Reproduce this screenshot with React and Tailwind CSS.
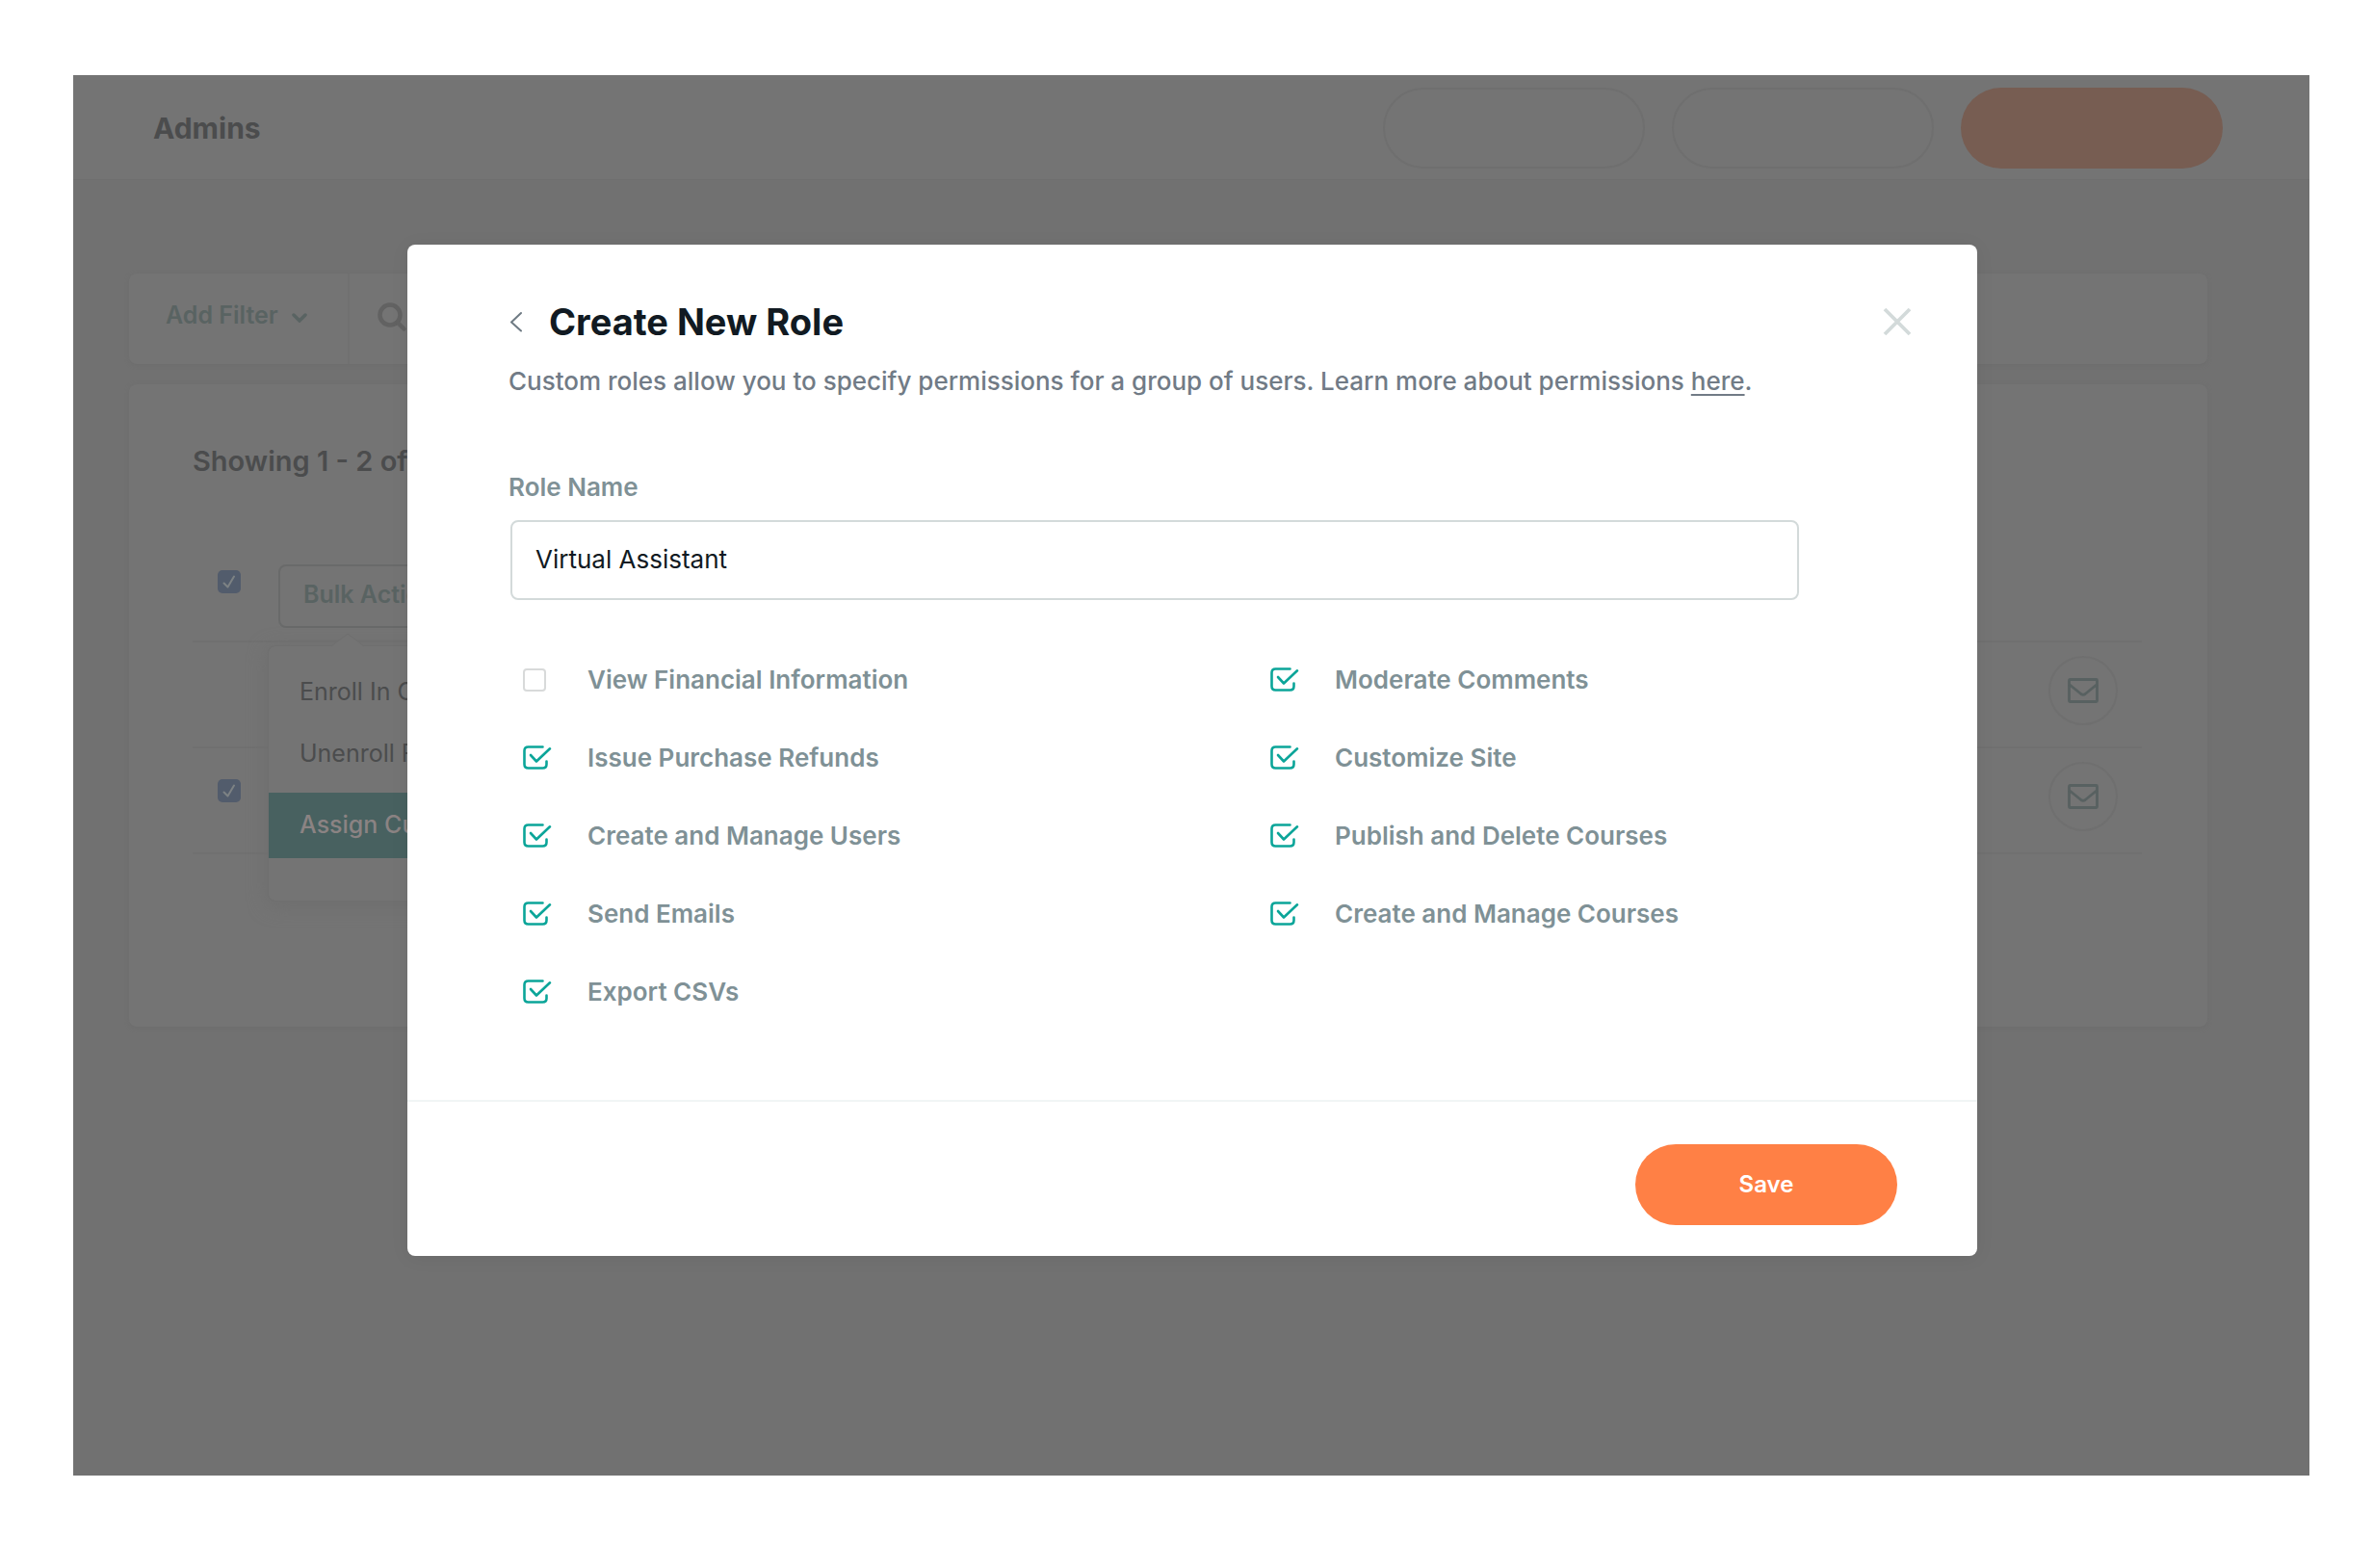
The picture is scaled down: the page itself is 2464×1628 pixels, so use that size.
import { useState } from "react";

const permissions = [
  { id: "financial", label: "View Financial Information", enabled: false },
  { id: "comments", label: "Moderate Comments", enabled: true },
  { id: "refunds", label: "Issue Purchase Refunds", enabled: true },
  { id: "site", label: "Customize Site", enabled: true },
  { id: "users", label: "Create and Manage Users", enabled: true },
  { id: "publish", label: "Publish and Delete Courses", enabled: true },
  { id: "emails", label: "Send Emails", enabled: true },
  { id: "courses", label: "Create and Manage Courses", enabled: true },
  { id: "csv", label: "Export CSVs", enabled: true },
];

function MailButton() {
  return (
    <button
      type="button"
      aria-label="Send email"
      className="flex size-[72px] items-center justify-center rounded-full border-2 border-[#6f6f6f]"
    >
      <svg viewBox="0 0 32 26" className="h-[26px] w-8" fill="none" stroke="#586161" strokeWidth="2.8">
        <rect x="1.5" y="1.5" width="29" height="23" rx="1" />
        <path d="M1.500 6.500L13.800 16.500q2.200 1.600 4.400 0L30.500 6.500" />
      </svg>
    </button>
  );
}

function RowCheckbox({ label }) {
  return (
    <span className="grid size-6">
      <input
        type="checkbox"
        defaultChecked
        aria-label={label}
        className="col-start-1 row-start-1 size-6 appearance-none rounded-[5px] bg-[#525c6c]"
      />
      <svg
        viewBox="0 0 24 24"
        className="pointer-events-none col-start-1 row-start-1 size-6"
        fill="none"
        stroke="#7d8284"
        strokeWidth="2"
        strokeLinecap="round"
        strokeLinejoin="round"
      >
        <path d="M6.500 13.500l4 4L17 6.500" />
      </svg>
    </span>
  );
}

function Permission({ item, checked, onToggle }) {
  return (
    <label className="flex h-[81px] items-center gap-[37px] text-[26px] leading-8 font-semibold text-[#7f9196]">
      <span className="grid h-8 w-[30px] items-center">
        <input
          type="checkbox"
          checked={checked}
          onChange={onToggle}
          className="peer col-start-1 row-start-1 size-6 appearance-none rounded-[4px] border-2 border-[#d8dada] checked:border-transparent"
        />
        <svg
          viewBox="0 0 30 26"
          className="pointer-events-none invisible col-start-1 row-start-1 h-[26px] w-[30px] peer-checked:visible"
          fill="none"
          stroke="#0ba599"
          strokeWidth="2.6"
          strokeLinecap="round"
          strokeLinejoin="round"
        >
          <path d="M20.500 1.500H5.500Q1.500 1.500 1.500 5.500V19.500Q1.500 23.500 5.500 23.500H20.500Q24.500 23.500 24.500 19.500V16.500" />
          <path d="M8 10l6 6.500L28 3.300" />
        </svg>
      </span>
      {item.label}
    </label>
  );
}

function AdminsPage() {
  return (
    <div className="text-[#4b4c4d]">
      <header className="flex h-[109px] items-center justify-between border-b border-[#6f6f6f] bg-[#747474] pt-0.5 pr-[90px] pl-[83px]">
        <h1 className="text-[30px] font-bold">Admins</h1>
        <div className="flex gap-7">
          <button type="button" aria-label="Export" className="h-[84px] w-[272px] rounded-full border-2 border-[#6f6f6f]" />
          <button type="button" aria-label="Import" className="h-[84px] w-[272px] rounded-full border-2 border-[#6f6f6f]" />
          <button type="button" aria-label="New admin" className="h-[84px] w-[272px] rounded-full bg-[#775d52]" />
        </div>
      </header>

      <main className="pt-[97px] pr-[106px] pl-[58px]">
        <div className="flex h-[94px] items-stretch rounded-lg bg-[#747474] shadow-[0_1px_4px_#6d6d6d]">
          <button
            type="button"
            className="flex w-[229px] items-center gap-3.5 border-r-2 border-[#707070] pb-1.5 pl-[38px] text-[25px] font-semibold text-[#596362]"
          >
            Add Filter
            <svg viewBox="0 0 16 10" className="mt-1 h-2.5 w-4" fill="none" stroke="currentColor" strokeWidth="3.5" strokeLinecap="round">
              <path d="M2 2l6 6 6-6" />
            </svg>
          </button>
          <div className="flex items-center pb-1 pl-7">
            <svg viewBox="0 0 32 32" className="size-8" fill="none" stroke="#626262" strokeWidth="4.5" strokeLinecap="round">
              <circle cx="14" cy="14" r="10.500" />
              <path d="M22 22l6.500 6.500" />
            </svg>
          </div>
        </div>

        <section className="mt-[21px] h-[667px] rounded-lg bg-[#747474] pt-[60px] pr-[68px] pl-[66px] shadow-[0_1px_4px_#6d6d6d]">
          <h2 className="text-[29px] leading-10 font-semibold">Showing 1 - 2 of 2</h2>
          <div className="mt-[87px] flex h-[81px] items-start border-b-2 border-[#707070] pl-[26px]">
            <div className="pt-1.5">
              <RowCheckbox label="Select all admins" />
            </div>
            <div className="relative ml-[39px]">
              <button
                type="button"
                className="h-[66px] w-60 rounded-lg border-2 border-[#696a6a] pb-0.5 pl-6 text-left text-[25px] font-semibold text-[#596362]"
              >
                Bulk Actions
              </button>
              <div className="absolute top-[84px] -left-[11px] z-10 h-[266px] w-[380px] rounded-lg border border-[#6f6f6f] bg-[#747474] pt-4 text-[25px] shadow-[0_4px_20px_#6e6e6e]">
                <svg viewBox="0 0 34 14" className="absolute -top-[14px] left-[65px] h-3.5 w-[34px]" fill="#747474" stroke="#6f6f6f">
                  <path d="M0 14L17 1l17 13" />
                </svg>
                <a href="#enroll" className="flex h-16 items-center pl-8">Enroll In Course</a>
                <a href="#unenroll" className="flex h-16 items-center pl-8">Unenroll From Course</a>
                <a href="#assign" className="mt-2 flex h-[68px] items-center bg-[#486160] pl-8 font-medium text-[#8b8383]">
                  Assign Custom Role
                </a>
              </div>
            </div>
          </div>
          <div className="flex h-[110px] items-start justify-end border-b-2 border-[#707070] pt-3.5 pr-[25px]">
            <MailButton />
          </div>
          <div className="flex h-[110px] items-start justify-between border-b-2 border-[#707070] pt-3.5 pr-[25px] pl-[26px]">
            <div className="pt-[18px]">
              <RowCheckbox label="Select admin" />
            </div>
            <MailButton />
          </div>
        </section>
      </main>
    </div>
  );
}

function CreateRoleModal() {
  const [roleName, setRoleName] = useState("Virtual Assistant");
  const [enabled, setEnabled] = useState(() =>
    Object.fromEntries(permissions.map((item) => [item.id, item.enabled]))
  );

  const toggle = (id) => setEnabled((current) => ({ ...current, [id]: !current[id] }));

  return (
    <div
      role="dialog"
      aria-modal="true"
      aria-labelledby="role-title"
      className="w-full max-w-[1630px] rounded-lg bg-white shadow-[0_2px_20px_rgba(0,0,0,0.06)]"
    >
      <form onSubmit={(event) => event.preventDefault()}>
        <div className="h-[888px] pt-[56px] pr-[68px] pl-[105px]">
          <div className="flex items-center justify-between">
            <div className="flex items-center gap-7">
              <button type="button" aria-label="Back">
                <svg viewBox="0 0 14 22" className="h-[22px] w-3.5" fill="none" stroke="#6f7b84" strokeWidth="2" strokeLinecap="round" strokeLinejoin="round">
                  <path d="M13 2L3 11.500l10 9" />
                </svg>
              </button>
              <h2 id="role-title" className="text-[38px] leading-12 font-bold text-[#111a22]">
                Create New Role
              </h2>
            </div>
            <button type="button" aria-label="Close">
              <svg viewBox="0 0 30 30" className="size-[30px]" fill="none" stroke="#d3dada" strokeWidth="3.8">
                <path d="M2 2l26 26M28 2L2 28" />
              </svg>
            </button>
          </div>
          <p className="mt-[22px] text-[26px] leading-8 font-medium text-[#717b86]">
            Custom roles allow you to specify permissions for a group of users. Learn more about permissions{" "}
            <a href="#permissions" className="underline underline-offset-4">here</a>.
          </p>

          <label htmlFor="role-name" className="mt-[78px] block text-[26px] leading-8 font-semibold text-[#7f9196]">
            Role Name
          </label>
          <input
            id="role-name"
            type="text"
            value={roleName}
            onChange={(event) => setRoleName(event.target.value)}
            className="mt-[18px] ml-0.5 block h-[83px] w-[1338px] max-w-full rounded-lg border-2 border-[#d3dada] px-6 pb-0.5 text-[26px] text-[#111a22]"
          />

          <div className="mt-[42px] grid grid-cols-[776px_1fr] pl-[15px]">
            {permissions.map((item) => (
              <Permission key={item.id} item={item} checked={enabled[item.id]} onToggle={() => toggle(item.id)} />
            ))}
          </div>
        </div>

        <div className="flex justify-end border-t-2 border-[#f1f5f5] pt-11 pr-[83px] pb-8">
          <button type="submit" className="h-[84px] w-[272px] rounded-full bg-[#ff8045] text-2xl font-semibold text-white">
            Save
          </button>
        </div>
      </form>
    </div>
  );
}

export default function App() {
  return (
    <div className="min-h-screen bg-white pt-[78px] pr-[66px] pb-24 pl-[76px] font-['Inter',sans-serif]">
      <div className="relative min-h-[calc(100vh-174px)] bg-[#717171]">
        <AdminsPage />
        <div className="absolute inset-0 z-20 flex items-start justify-center pt-[176px] pl-0.5">
          <CreateRoleModal />
        </div>
      </div>
    </div>
  );
}
